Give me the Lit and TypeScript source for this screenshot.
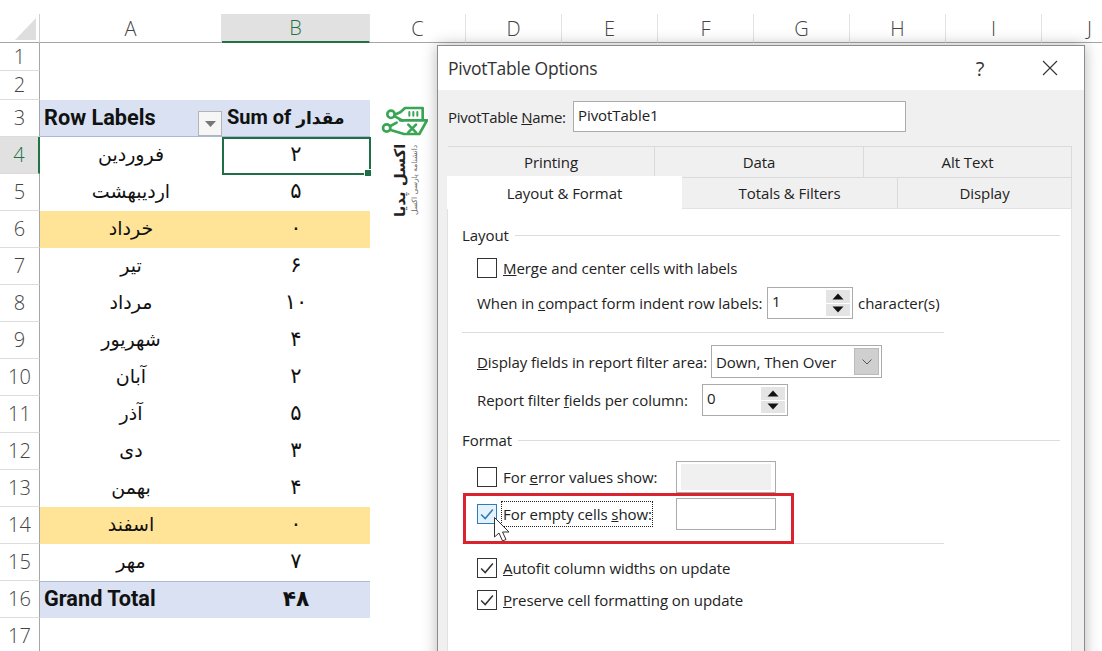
import { LitElement, html, css, svg } from "lit";
import { customElement } from "lit/decorators.js";

const COLS = ["A", "B", "C", "D", "E", "F", "G", "H", "I", "J"];
type Row = { n: number; a?: string; b?: string; kind?: string };
const ROWS: Row[] = [
  { n: 1 }, { n: 2 },
  { n: 3, a: "Row Labels", kind: "head" },
  { n: 4, a: "فروردین", b: "۲", kind: "sel" },
  { n: 5, a: "اردیبهشت", b: "۵" },
  { n: 6, a: "خرداد", b: "۰", kind: "warn" },
  { n: 7, a: "تیر", b: "۶" },
  { n: 8, a: "مرداد", b: "۱۰" },
  { n: 9, a: "شهریور", b: "۴" },
  { n: 10, a: "آبان", b: "۲" },
  { n: 11, a: "آذر", b: "۵" },
  { n: 12, a: "دی", b: "۳" },
  { n: 13, a: "بهمن", b: "۴" },
  { n: 14, a: "اسفند", b: "۰", kind: "warn" },
  { n: 15, a: "مهر", b: "۷" },
  { n: 16, a: "Grand Total", b: "۴۸", kind: "total" },
  { n: 17 },
];

const check = svg`<svg class="tick" viewBox="0 0 20 20"><path d="M3.5 10.5 L8 15 L16.5 5" fill="none" stroke="currentColor" stroke-width="1.7"/></svg>`;
const spin = html`<span class="spin"><span class="sb"><svg viewBox="0 0 12 7" width="12" height="7"><path d="M6 0.5 L11.5 6.5 H0.5 Z" fill="#111"/></svg></span><span class="sb"><svg viewBox="0 0 12 7" width="12" height="7"><path d="M6 6.5 L11.5 0.5 H0.5 Z" fill="#111"/></svg></span></span>`;

@customElement("app-root")
export class AppRoot extends LitElement {
  static styles = css`
    :host { display: block; width: 1102px; height: 651px; position: relative; overflow: hidden; background: #fff; font-family: "Open Sans", sans-serif; color: #222; }
    .sheet { display: grid; grid-template-columns: 40px 182px 148px repeat(8, 96px); grid-template-rows: 29px 28px 29px repeat(15, 37px); padding-top: 14px; }
    .corner, .ch { box-sizing: border-box; background: #fff; border-bottom: 1px solid #a6a6a6; display: flex; align-items: center; justify-content: center; font: 300 20px "Open Sans", sans-serif; color: #444; position: relative; }
    .corner { border-right: 1px solid #d0d0d0; }
    .corner svg { position: absolute; left: 15px; top: 4px; }
    .ch { border-right: 1px solid #e2e2e2; }
    .ch.on { background: #e1e1e1; color: #217346; border-bottom: 2px solid #217346; }
    .rh { box-sizing: border-box; border-right: 1px solid #a6a6a6; border-bottom: 1px solid #dcdcdc; display: flex; align-items: center; justify-content: center; font: 300 20px "Open Sans", sans-serif; color: #444; background: #fff; padding-bottom: 1px; }
    .rh.on { background: #e1e1e1; color: #217346; border-right: 2px solid #217346; }
    .c { box-sizing: border-box; display: flex; align-items: center; justify-content: center; font: 400 19px "DejaVu Sans", sans-serif; color: #111; min-width: 0; position: relative; white-space: nowrap; padding-bottom: 4px; }
    .c.b { font-size: 21px; }
    .warn { background: #ffe498; }
    .c.head { background: #d9e1f2; border-bottom: 1px solid #a9b9d6; font: 700 21.7px Roboto, "DejaVu Sans", sans-serif; padding-bottom: 2px; }
    .c.total { background: #d9e1f2; border-top: 1px solid #a9b9d6; font: 700 21.7px Roboto, "DejaVu Sans", sans-serif; padding-bottom: 4px; }
    .head.a, .total.a { justify-content: flex-start; padding-left: 4px; }
    .c.head.b { justify-content: flex-start; padding-left: 5px; font-size: 20px; }
    .fa { font-size: 17px; font-family: "DejaVu Sans", sans-serif; }
    .filter { position: absolute; right: 0; top: 11px; width: 24px; height: 25px; box-sizing: border-box; background: #f6f6f6; border: 1px solid #b4b4b4; display: flex; align-items: center; justify-content: center; }
    .selbox { position: absolute; left: 0; top: 0; width: 149px; height: 38px; box-sizing: border-box; border: 2px solid #1f6e45; }
    .handle { position: absolute; right: -3px; bottom: -4px; width: 8px; height: 8px; background: #1f6e45; border: 1px solid #fff; box-sizing: border-box; }

    .logo { position: absolute; left: 380px; top: 102px; width: 48px; display: flex; flex-direction: column; align-items: center; }
    .logotext { display: flex; flex-direction: column; gap: 3px; margin: 2px 0 0 4px; writing-mode: vertical-rl; transform: rotate(180deg); align-items: center; height: 72px; }
    .lt1 { font: 700 15px/15px "DejaVu Sans", sans-serif; color: #222; white-space: nowrap; }
    .lt2 { font: 400 7.5px/8px "DejaVu Sans", sans-serif; color: #666; white-space: nowrap; }

    .dialog { position: absolute; left: 437px; top: 45px; width: 648px; height: 640px; box-sizing: border-box; border: 1px solid #8c8c8c; background: #f0f0f0; box-shadow: 0 0 14px rgba(0,0,0,.28); display: flex; flex-direction: column; font: 400 15px "Open Sans", sans-serif; letter-spacing: -.06px; color: #222; }
    .title { height: 44px; flex: none; background: #fff; display: flex; align-items: center; padding-left: 10px; font-size: 17.5px; color: #333; letter-spacing: -.25px; }
    .title span { flex: 1; }
    .title .q { flex: none; width: 20px; text-align: center; font-size: 20px; margin-right: 52px; font-weight: 400; }
    .title svg { margin-right: 26px; }
    .body { padding: 11px 12px 0 9px; flex: 1; }
    .name { display: flex; align-items: center; height: 31px; margin-left: 1px; }
    .name label { width: 125px; letter-spacing: -.3px; white-space: nowrap; }
    .inp { box-sizing: border-box; border: 1px solid #ababab; background: #fff; display: flex; align-items: center; padding-left: 4px; }
    .name .inp { width: 333px; height: 31px; padding-bottom: 4px; }
    .tabs { margin-top: 14px; display: flex; flex-direction: column; }
    .trow { display: flex; height: 31px; margin-left: 1px; text-align: center; }
    .trow + .trow { margin-left: 0; }
    .tab { box-sizing: border-box; display: flex; align-items: center; justify-content: center; background: #f0f0f0; border-top: 1px solid #dadada; border-right: 1px solid #dadada; }
    .tab.act { background: #fff; height: 33px; margin-top: -1px; border: none; position: relative; z-index: 1; }
    .w207 { width: 207px; } .w209 { width: 209px; } .w208 { width: 208px; }
    .w235 { width: 235px; } .w216 { width: 216px; } .w174 { width: 174px; }
    .panel { background: #fff; height: 460px; width: 625px; box-sizing: border-box; border: 1px solid #e2e2e2; border-bottom: none; padding: 16px 0 0 14px; }
    .sec { display: flex; align-items: center; height: 20px; width: 598px; gap: 6px; }
    .sec i { flex: 1; height: 1px; background: #dcdcdc; }
    .row { display: flex; align-items: center; margin-left: 15px; white-space: nowrap; }
    .h24 { height: 24px; }
    .mt5 { margin-top: 5px; } .mt6 { margin-top: 6px; } .mt7 { margin-top: 7px; } .mt8 { margin-top: 8px; }
    .mt11 { margin-top: 11px; } .mt12 { margin-top: 12px; } .mt13 { margin-top: 13px; } .mt14 { margin-top: 14px; }
    .cb { box-sizing: border-box; flex: none; width: 20px; height: 20px; border: 1px solid #333; background: #fff; margin-right: 6px; color: #333; display: flex; }
    .cb.focus { border-color: #2b7cb8; color: #2b7cb8; background: #e6f2fb; }
    .tick { width: 18px; height: 18px; }
    .sep { height: 1px; background: #dcdcdc; width: 482px; }
    .num { position: relative; height: 32px; width: 86px; padding-bottom: 4px; }
    .spin { position: absolute; right: 2px; top: 2px; bottom: 2px; width: 24px; display: flex; flex-direction: column; gap: 1px; }
    .sb { flex: 1; background: #e4e4e4; display: flex; align-items: center; justify-content: center; }
    .select { height: 33px; width: 171px; position: relative; padding-left: 4px; }
    .select b { position: absolute; right: 2px; top: 2px; bottom: 2px; width: 25px; background: #cfcfcf; border: 1px solid #bbb; box-sizing: border-box; display: flex; align-items: center; justify-content: center; }
    .box { width: 100px; height: 32px; padding: 0; }
    .box.dis { background: #fff; padding: 2px 4px; }
    .box.dis i { flex: 1; align-self: stretch; background: #f0f0f0; }
    .focusrect { outline: 1px dotted #222; outline-offset: 0; padding: 2px 0 2px 1px; margin-left: -1px; }
    .l290 { width: 290px; } .l234 { width: 234px; } .l225 { width: 225px; } .l173 { width: 173px; }
    .ml5 { margin-left: 5px; }

    .red { position: absolute; left: 463px; top: 493px; width: 331px; height: 51px; box-sizing: border-box; border: 3px solid #d9232e; pointer-events: none; }
    .cursor { position: absolute; left: 494px; top: 517px; }
  `;

  private sheet() {
    return html`<div class="sheet">
      <div class="corner"><svg width="22" height="22"><path d="M21 0 V22 H0 Z" fill="#dedede"/></svg></div>
      ${COLS.map((c) => html`<div class="ch ${c === "B" ? "on" : ""}">${c}</div>`)}
      ${ROWS.map((r) => html`
        <div class="rh ${r.n === 4 ? "on" : ""}">${r.n}</div>
        <div class="c a ${r.kind ?? ""}">
          ${r.kind === "head" || r.kind === "total" ? html`<span>${r.a}</span>` : html`<span dir="rtl">${r.a ?? ""}</span>`}
          ${r.kind === "head" ? html`<span class="filter"><svg width="11" height="6"><path d="M0 0 H11 L5.5 6 Z" fill="#777"/></svg></span>` : ""}
        </div>
        <div class="c b ${r.kind ?? ""}">
          ${r.kind === "head" ? html`<span>Sum of <span class="fa">مقدار</span></span>` : html`<span>${r.b ?? ""}</span>`}
          ${r.kind === "sel" ? html`<span class="selbox"><span class="handle"></span></span>` : ""}
        </div>
        ${COLS.slice(2).map(() => html`<div></div>`)}
      `)}
    </div>`;
  }

  private logo() {
    return html`<div class="logo">
      <svg width="48" height="40" viewBox="0 0 144 120" fill="none" stroke="#3aa655" stroke-width="8" stroke-linejoin="round" stroke-linecap="round">
        <circle cx="33" cy="37" r="11"/><circle cx="20" cy="78" r="11"/>
        <path d="M44 38 L62 30 L75 18 H128 V50"/>
        <path d="M44 43 L68 56"/>
        <path d="M31 72 L50 62"/>
        <path d="M60 55 H141 L118 96 H72 L32 84"/>
        <path d="M88 30 V41 M100 30 V41 M112 30 V41" stroke-width="6"/>
        <path d="M85 68 L108 91 M108 68 L85 91" stroke-width="8"/>
      </svg>
      <div class="logotext">
        <span class="lt1">اکسل پدیا</span>
        <span class="lt2">دانشنامه پارسی اکسل</span>
      </div>
    </div>`;
  }

  private dialog() {
    return html`<div class="dialog">
      <div class="title"><span>PivotTable Options</span><span class="q">?</span>
        <svg width="16" height="16"><path d="M1 1 L15 15 M15 1 L1 15" stroke="#333" stroke-width="1.1"/></svg></div>
      <div class="body">
        <div class="name"><label>PivotTable <u>N</u>ame:</label><div class="inp">PivotTable1</div></div>
        <div class="tabs">
          <div class="trow">
            <div class="tab w207">Printing</div>
            <div class="tab w209">Data</div>
            <div class="tab w208">Alt Text</div>
          </div>
          <div class="trow">
            <div class="tab act w235">Layout &amp; Format</div>
            <div class="tab w216">Totals &amp; Filters</div>
            <div class="tab w174">Display</div>
          </div>
          <div class="panel">
            <div class="sec">Layout<i></i></div>
            <div class="row h24 mt11"><span class="cb"></span><span><u>M</u>erge and center cells with labels</span></div>
            <div class="row mt7"><span class="l290">When in <u>c</u>ompact form indent row labels:</span><div class="inp num">1${spin}</div><span class="ml5">character(s)</span></div>
            <div class="sep mt13"></div>
            <div class="row mt12"><span class="l234"><u>D</u>isplay fields in report filter area:</span><div class="inp select">Down, Then Over<b><svg width="10" height="6"><path d="M0.5 0.5 L5 5 L9.5 0.5" fill="none" stroke="#555"/></svg></b></div></div>
            <div class="row mt6"><span class="l225">Report filter <u>f</u>ields per column:</span><div class="inp num">0${spin}</div></div>
            <div class="sec mt14">Format<i></i></div>
            <div class="row mt11"><span class="cb"></span><span class="l173">For <u>e</u>rror values show:</span><div class="inp box dis"><i></i></div></div>
            <div class="row mt5"><span class="cb focus">${check}</span><span class="l173"><span class="focusrect">For empty cells <u>s</u>how:</span></span><div class="inp box"></div></div>
            <div class="sep mt13"></div>
            <div class="row h24 mt12"><span class="cb">${check}</span><span><u>A</u>utofit column widths on update</span></div>
            <div class="row h24 mt8"><span class="cb">${check}</span><span><u>P</u>reserve cell formatting on update</span></div>
          </div>
        </div>
      </div>
    </div>`;
  }

  render() {
    return html`
      ${this.sheet()}
      ${this.logo()}
      ${this.dialog()}
      <svg class="cursor" width="20" height="26" viewBox="0 0 20 26"><path d="M0.5 0.5 V20 L5 16 L8.5 24 L12 22.5 L8.5 15 H15 Z" fill="#fff" stroke="#333" stroke-width="1"/></svg>
      <div class="red"></div>
    `;
  }
}
